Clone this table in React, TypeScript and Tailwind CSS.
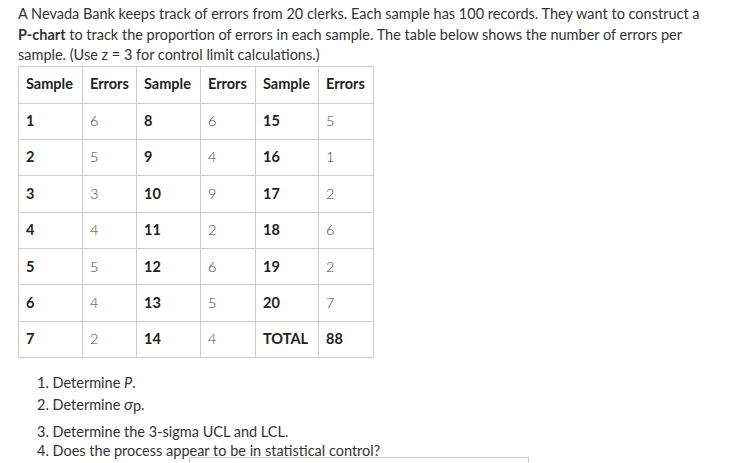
const rows: [string, string, string, string, string, string][] = [
  ["1", "6", "8", "6", "15", "5"],
  ["2", "5", "9", "4", "16", "1"],
  ["3", "3", "10", "9", "17", "2"],
  ["4", "4", "11", "2", "18", "6"],
  ["5", "5", "12", "6", "19", "2"],
  ["6", "4", "13", "5", "20", "7"],
  ["7", "2", "14", "4", "TOTAL", "88"],
];

const colW = ["w-[64px]", "w-[54px]", "w-[64px]", "w-[55px]", "w-[63px]", "w-[55px]"];

export default function App() {
  return (
    <div className="w-[746px] h-[463px] overflow-hidden bg-white text-[#333] font-['Lato',sans-serif] text-[14.5px] leading-[20.5px]">
      <div className="pl-[18px] pr-[10px] pt-[4px]">
        <p className="whitespace-nowrap">
          A Nevada Bank keeps track of errors from 20 clerks. Each sample has 100 records. They want to construct a
          <br />
          <b className="font-bold">P-chart</b> to track the proportion of errors in each sample. The table below shows the number of errors per
          <br />
          sample. (Use z = 3 for control limit calculations.)
        </p>

        <table className="border-collapse text-[14.5px]">
          <thead>
            <tr className="h-[37px]">
              {["Sample", "Errors", "Sample", "Errors", "Sample", "Errors"].map((h, i) => (
                <th key={i} className={`${colW[i]} border border-[#ccc] px-[7px] text-left font-bold text-[#222]`}>
                  {h}
                </th>
              ))}
            </tr>
          </thead>
          <tbody>
            {rows.map((r, ri) => (
              <tr key={ri} className="h-[36.4px]">
                {r.map((c, ci) => (
                  <td
                    key={ci}
                    className={`border border-[#ccc] px-[7px] ${
                      ci % 2 === 0 || (ri === 6 && ci === 5) ? "font-bold text-[#222]" : "font-light text-[#444]"
                    }`}
                  >
                    {c}
                  </td>
                ))}
              </tr>
            ))}
          </tbody>
        </table>

        <ol className="mt-[15px] pl-[19px]">
          <li className="h-[21px]">1. Determine <i>P</i>.</li>
          <li className="h-[21px]">
            2. Determine <span className="italic text-[16px]">σ</span>
            <span className="relative top-[1px]">p</span>.
          </li>
          <li className="mt-[7px] h-[19px]">3. Determine the 3-sigma UCL and LCL.</li>
          <li className="h-[21px]">4. Does the process appear to be in statistical control?</li>
        </ol>
      </div>
      <div className="ml-[189px] -mt-[5px] w-[340px] h-[20px] border-t border-x border-[#ccc]" />
    </div>
  );
}
